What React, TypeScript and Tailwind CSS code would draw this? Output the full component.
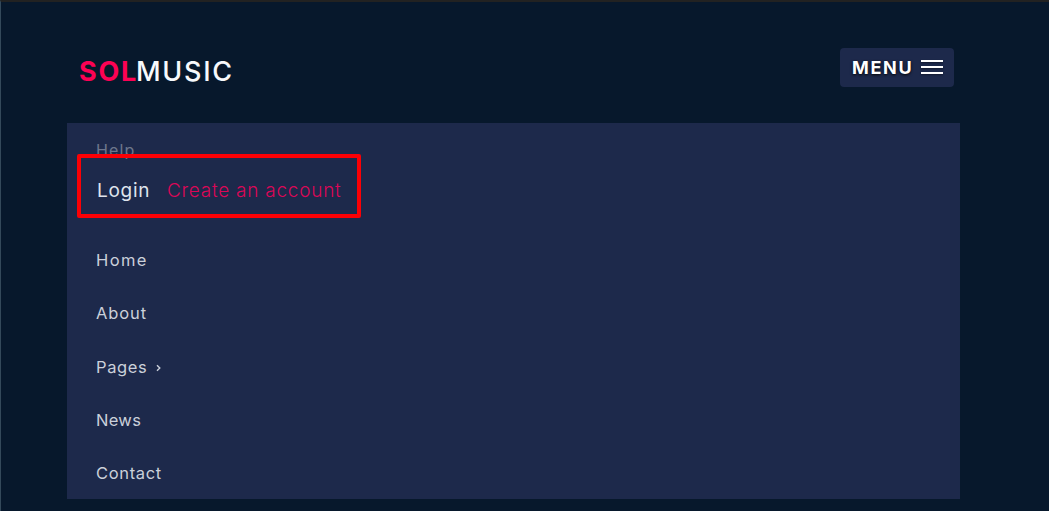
type NavLink = { label: string; spacing: string; hasSubmenu?: boolean };

const links: NavLink[] = [
  { label: "Home", spacing: "text-[16.5px] tracking-[1.4px]" },
  { label: "About", spacing: "text-[16.5px] tracking-[0.9px]" },
  { label: "Pages", spacing: "text-[16.5px] tracking-[0.6px]", hasSubmenu: true },
  { label: "News", spacing: "text-[16.5px] tracking-[0.3px]" },
  { label: "Contact", spacing: "text-[16.5px] tracking-[0.65px]" },
];

function Chevron() {
  return (
    <svg className="ml-[9px] mt-0.5 h-2 w-[5px]" viewBox="0 0 5 8" fill="none" stroke="currentColor" strokeWidth="1.4">
      <path d="M1 1.2 3.8 4 1 6.8" />
    </svg>
  );
}

function Header() {
  return (
    <header className="flex h-[121px] items-start justify-between pl-[78px] pr-[95px]">
      <div className="mt-[54px] flex text-[27px] leading-8">
        <span className="w-[57px] font-bold tracking-[1.7px] text-[#fc0254]">SOL</span>
        <span className="font-medium tracking-[1.7px] text-[#f7f9fc]">MUSIC</span>
      </div>
      <button className="mt-[46px] flex h-[39px] w-[114px] items-center rounded-[4px] bg-[#1d294b] pl-3 text-white">
        <span className="w-[69px] text-left text-[18px] font-bold tracking-[1.7px] [text-shadow:0_1px_3px_#000]">
          MENU
        </span>
        <span className="flex flex-col gap-[4px] pb-px">
          <span className="h-[2px] w-[22px] bg-white shadow-[0_1px_2px_#0006]" />
          <span className="h-[2px] w-[22px] bg-white shadow-[0_1px_2px_#0006]" />
          <span className="h-[2px] w-[22px] bg-white shadow-[0_1px_2px_#0006]" />
        </span>
      </button>
    </header>
  );
}

export default function App() {
  return (
    <div className="h-[511px] w-[1049px] overflow-hidden border-l border-t-2 border-l-[#34495a] border-t-[#222222] bg-[#07182c] font-['Inter',sans-serif]">
      <Header />
      <nav className="relative ml-[66px] h-[376px] w-[893px] bg-[#1d294b] pl-[29px] pt-[17px] text-[16px] leading-5 text-[#cbd0da]">
        <a className="block tracking-[1.1px] text-[#6d768c]">Help</a>
        <div className="mt-[19px] flex h-6 items-center pl-px text-[19px] leading-6">
          <a className="w-[70px] tracking-[0.7px] text-[#dfe3ec]">Login</a>
          <a className="font-light tracking-[0.75px] text-[#dc0757]">Create an account</a>
        </div>
        <ul className="mt-[47px] flex flex-col gap-[33.3px]">
          {links.map((link) => (
            <li key={link.label} className="flex h-5 items-center">
              <span className={link.spacing}>{link.label}</span>
              {link.hasSubmenu && <Chevron />}
            </li>
          ))}
        </ul>
        <div className="absolute left-[10px] top-[31px] h-[64px] w-[284px] rounded-[2px] border-[4px] border-[#fc0005]" />
      </nav>
    </div>
  );
}
